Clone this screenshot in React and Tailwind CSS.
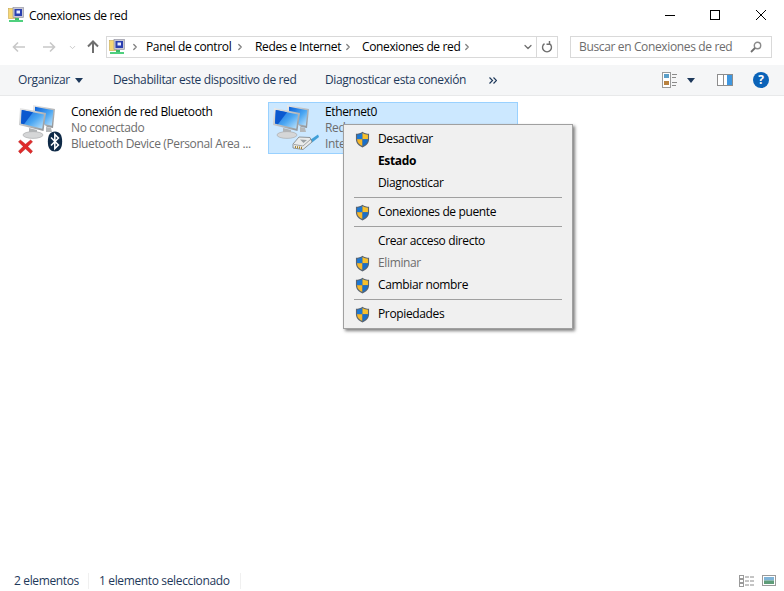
import { ChevronRight, ChevronDown } from 'lucide-react';

const FONT = "font-['Open_Sans','Noto_Sans',sans-serif]";

function NetIconSmall({ className }) {
  return (
    <svg viewBox="0 0 16 16" className={className}>
      <rect x="0.5" y="1.5" width="7" height="10" fill="#f7d774" stroke="#c9a94f" strokeWidth="0.6" />
      <rect x="5" y="0.5" width="10.5" height="10" fill="#c8c8d4" stroke="#8a8a9a" strokeWidth="0.6" />
      <rect x="6.5" y="2" width="7.5" height="7" fill="#2a3fb0" />
      <rect x="8.5" y="3.5" width="3.5" height="3" fill="#e8ecff" />
      <rect x="7" y="11" width="4" height="2" fill="#3db86a" />
      <rect x="1" y="13" width="14" height="2" fill="#4fd07e" />
    </svg>
  );
}

function Shield() {
  return (
    <svg viewBox="0 0 16 18" className="w-[15px] h-[17px]">
      <path d="M8 0.6 C6 2 3.5 2.8 1 2.8 V9 C1 13 4 15.8 8 17.4 C12 15.8 15 13 15 9 V2.8 C12.5 2.8 10 2 8 0.6 Z" fill="#5a6470" />
      <path d="M8 2 C6.2 3.2 4.2 3.8 2.2 3.9 V8.6 H8 Z" fill="#1c78d4" />
      <path d="M8 2 C9.8 3.2 11.8 3.8 13.8 3.9 V8.6 H8 Z" fill="#f7c02c" />
      <path d="M2.2 8.6 H8 V16 C4.8 14.6 2.2 12.4 2.2 9 Z" fill="#f7b82a" />
      <path d="M13.8 8.6 H8 V16 C11.2 14.6 13.8 12.4 13.8 9 Z" fill="#1a6fc9" />
    </svg>
  );
}

function Monitors() {
  return (
    <svg viewBox="0 0 48 48" className="w-12 h-12">
      <defs>
        <linearGradient id="scr" x1="0" y1="0" x2="1" y2="1">
          <stop offset="0" stopColor="#0a5fd8" />
          <stop offset="0.55" stopColor="#4aa6f2" />
          <stop offset="1" stopColor="#c5e6fb" />
        </linearGradient>
        <linearGradient id="frame" x1="0" y1="0" x2="1" y2="1">
          <stop offset="0" stopColor="#ececec" />
          <stop offset="1" stopColor="#8c9094" />
        </linearGradient>
      </defs>
      {/* back monitor */}
      <path d="M18 1 L40 5 L38 24 L32 23 L18 10 Z" fill="url(#frame)" />
      <path d="M20 2.8 L38.4 6.2 L36.8 21.8 L20 18 Z" fill="url(#scr)" />
      <path d="M31 23 L36 24 L37 28 L31 28 Z" fill="#b5b8ba" />
      {/* front monitor */}
      <path d="M5 4 L31 9 L28.5 27 L4 21 Z" fill="url(#frame)" />
      <path d="M6.8 6 L29 10.4 L27.2 24.8 L6 19.6 Z" fill="url(#scr)" />
      <path d="M6.8 6 L18 8.2 L9 20.3 L6 19.6 Z" fill="#0b58cf" />
      <path d="M14 24 L22 26 L22 30 L14 29 Z" fill="#b0b3b5" />
      <ellipse cx="18" cy="31" rx="10" ry="3.4" fill="#d5d6d7" stroke="#a4a6a8" strokeWidth="0.6" />
    </svg>
  );
}

function Cable() {
  return (
    <svg viewBox="0 0 27 16" className="w-[27px] h-4">
      <path d="M18 6 L26 0.5 L27 3 L20 8.5 Z" fill="#3f9fd8" />
      <path d="M7 3 L18 3.5 L20 8 L11 15.5 L1 14 L1 10 Z" fill="#e9ebeb" stroke="#7c8082" strokeWidth="0.8" />
      <path d="M2 10.5 L11 12 L19 5" fill="none" stroke="#8d9193" strokeWidth="0.8" />
      <path d="M3.5 12 V14 M5.5 12.2 V14.4 M7.5 12.5 V14.7 M9.5 12.8 V15" stroke="#a8862e" strokeWidth="1" />
      <path d="M8 5.5 L15 6 L11.5 9 Z" fill="#9aa0a3" />
    </svg>
  );
}

function RedX() {
  return (
    <svg viewBox="0 0 16 16" className="w-[15px] h-[15px]">
      <path d="M2.5 1 L8 5.5 L13.5 1 L15.5 3 L10.5 8 L15.5 13 L13.5 15.5 L8 10.5 L2.5 15.5 L0.5 13 L5.5 8 L0.5 3 Z" fill="#e02b2b" stroke="#b51d1d" strokeWidth="0.5" />
    </svg>
  );
}

function BluetoothBadge() {
  return (
    <svg viewBox="0 0 16 22" className="w-4 h-[21px]">
      <path d="M8 0.5 C13 0.5 15.5 4 15.5 11 C15.5 18 13 21.5 8 21.5 C3 21.5 0.5 18 0.5 11 C0.5 4 3 0.5 8 0.5 Z" fill="#0f2a47" />
      <path d="M3.8 6.8 L11.6 14.6 L7.8 18.4 V3.6 L11.6 7.4 L3.8 15.2" fill="none" stroke="#fff" strokeWidth="1.6" />
    </svg>
  );
}

function Tile({ selected, name, line2, line3, children }) {
  return (
    <div className={`relative flex w-[250px] h-[52px] border ${selected ? 'bg-[#cce8ff] border-[#99d1ff]' : 'border-transparent'}`}>
      <div className="relative mt-[1px] w-12 h-12 shrink-0">
        <Monitors />
        {children}
      </div>
      <div className="ml-2 mt-[1px] text-xs leading-4 whitespace-nowrap">
        <div className="text-black">{name}</div>
        <div className="text-[#6d6d6d]">{line2}</div>
        <div className="text-[#6d6d6d]">{line3}</div>
      </div>
    </div>
  );
}

function MenuItem({ label, shield, bold, disabled }) {
  return (
    <div className="flex items-center h-[22px]">
      <div className="w-[34px] flex justify-center pl-[3px] shrink-0">
        {shield && <Shield />}
      </div>
      <span className={`text-xs ${bold ? 'font-bold text-black' : disabled ? 'text-[#6d6d6d]' : 'text-black'}`}>{label}</span>
    </div>
  );
}

function MenuSep() {
  return <div className="h-[7px] flex items-center pl-[10px] pr-[10px]"><div className="h-px w-full bg-[#a0a0a0]" /></div>;
}

export default function App() {
  return (
    <div className={`relative w-[784px] h-[591px] bg-white flex flex-col overflow-hidden tracking-[-0.36px] ${FONT}`}>
      {/* Title bar */}
      <div className="flex items-center h-[30px] shrink-0">
        <NetIconSmall className="w-4 h-4 ml-2" />
        <span className="ml-[5px] pt-[2px] text-xs text-black">Conexiones de red</span>
        <div className="ml-auto flex items-center pr-[18px]">
          <div className="w-[10px] h-px bg-black" />
          <div className="ml-[35px] w-[10px] h-[10px] border border-black" />
          <svg viewBox="0 0 10 10" className="ml-[36px] w-[10px] h-[10px]"><path d="M0 0 L10 10 M10 0 L0 10" stroke="#000" strokeWidth="1" /></svg>
        </div>
      </div>

      {/* Address row */}
      <div className="flex items-center h-[22px] mt-[6px] shrink-0">
        <svg viewBox="0 0 16 16" className="w-4 h-4 ml-[11px]"><path d="M14 8 H3 M7 3.5 L2.5 8 L7 12.5" fill="none" stroke="#c8c8c8" strokeWidth="1.6" /></svg>
        <svg viewBox="0 0 16 16" className="w-4 h-4 ml-[14px]"><path d="M2 8 H13 M9 3.5 L13.5 8 L9 12.5" fill="none" stroke="#c8c8c8" strokeWidth="1.6" /></svg>
        <ChevronDown className="w-[9px] h-[9px] ml-[11px] text-[#c8c8c8]" strokeWidth={2.5} />
        <svg viewBox="0 0 16 16" className="w-4 h-4 ml-2"><path d="M8 14 V3 M3 7.5 L8 2.5 L13 7.5" fill="none" stroke="#6f6f6f" strokeWidth="2" /></svg>
        <div className="ml-[5px] w-[452px] h-[22px] border border-[#d9d9d9] flex items-center">
          <NetIconSmall className="w-4 h-4 ml-[2px]" />
          <ChevronRight className="w-[10px] h-[10px] ml-[5px] text-[#808080]" strokeWidth={3} />
          <span className="ml-[6px] w-[89px] text-xs text-black whitespace-nowrap">Panel de control</span>
          <ChevronRight className="w-[10px] h-[10px] text-[#808080]" strokeWidth={3} />
          <span className="ml-[10px] w-[88px] text-xs text-black whitespace-nowrap">Redes e Internet</span>
          <ChevronRight className="w-[10px] h-[10px] text-[#808080]" strokeWidth={3} />
          <span className="ml-[9px] w-[100px] text-xs text-black whitespace-nowrap">Conexiones de red</span>
          <ChevronRight className="w-[10px] h-[10px] text-[#808080]" strokeWidth={3} />
          <ChevronDown className="w-3 h-3 ml-auto mr-[2px] text-[#707070]" strokeWidth={2.5} />
          <div className="w-px h-full bg-[#d9d9d9]" />
          <div className="w-5 flex justify-center">
            <svg viewBox="0 0 12 12" className="w-3 h-3"><path d="M3.5 2.6 A4.5 4.5 0 1 0 8.5 2.6 M8.5 0 V3.2 H5.5" fill="none" stroke="#6f6f6f" strokeWidth="1.4" /></svg>
          </div>
        </div>
        <div className="ml-[12px] w-[202px] h-[22px] border border-[#d9d9d9] flex items-center pl-2 pr-[9px]">
          <span className="text-xs text-[#6d6d6d] whitespace-nowrap">Buscar en Conexiones de red</span>
          <svg viewBox="0 0 12 12" className="w-3 h-3 ml-auto"><circle cx="7.5" cy="4.5" r="3.2" fill="none" stroke="#8a8a8a" strokeWidth="1.4" /><path d="M5 7 L1 11" stroke="#6f6f6f" strokeWidth="1.8" /></svg>
        </div>
      </div>

      {/* Command bar */}
      <div className="flex items-center h-[31px] mt-[7px] shrink-0 bg-[#f5f6f7] border-b border-[#e8e9ea] text-xs text-[#1e395b] pl-[18px]">
        <span className="w-[57px]">Organizar</span>
        <svg viewBox="0 0 8 5" className="w-2 h-[5px]"><path d="M0 0 H8 L4 5 Z" fill="#1e395b" /></svg>
        <span className="ml-[30px] w-[212px] whitespace-nowrap">Deshabilitar este dispositivo de red</span>
        <span className="w-[164px] whitespace-nowrap">Diagnosticar esta conexión</span>
        <svg viewBox="0 0 8 7" className="w-2 h-[7px]"><path d="M0.5 0.5 L3.5 3.5 L0.5 6.5 M4.5 0.5 L7.5 3.5 L4.5 6.5" fill="none" stroke="#1e395b" strokeWidth="1.2" /></svg>
        <div className="ml-auto flex items-center pr-[15px]">
          <svg viewBox="0 0 16 16" className="w-4 h-4">
            <rect x="0.5" y="0.5" width="8" height="15" fill="#fff" stroke="#9a9a9a" />
            <rect x="2" y="2" width="5" height="4" fill="#5b9fc9" />
            <rect x="2" y="9" width="5" height="4" fill="#b9823f" />
            <path d="M10 2.5 H15 M10 5.5 H14 M10 10.5 H15 M10 13.5 H14" stroke="#8a8a8a" />
          </svg>
          <svg viewBox="0 0 8 5" className="w-2 h-[5px] ml-[9px]"><path d="M0 0 H8 L4 5 Z" fill="#1e395b" /></svg>
          <svg viewBox="0 0 16 12" className="w-4 h-3 ml-[22px]">
            <rect x="0.5" y="0.5" width="15" height="11" fill="#fff" stroke="#8d8d8d" />
            <rect x="6" y="1" width="1" height="10" fill="#8d8d8d" />
            <rect x="10" y="1" width="5" height="10" fill="#3f97e0" />
          </svg>
          <div className="ml-[20px] w-4 h-4 rounded-full bg-[#0b63b8] flex items-center justify-center text-white text-[12px] font-bold leading-none">?</div>
        </div>
      </div>

      {/* Items */}
      <div className="flex-1 flex gap-1 pl-[14px] pt-[6px]">
        <Tile name="Conexión de red Bluetooth" line2="No conectado" line3="Bluetooth Device (Personal Area ...">
          <div className="absolute left-[3px] top-[35px]"><RedX /></div>
          <div className="absolute left-[32px] top-[27px]"><BluetoothBadge /></div>
        </Tile>
        <Tile selected name="Ethernet0" line2="Red" line3="Inte">
          <div className="absolute left-[23px] top-[30px]"><Cable /></div>
        </Tile>
      </div>

      {/* Status bar */}
      <div className="flex items-center h-[22px] shrink-0 text-xs text-[#1e395b] pl-[14px] pt-[1px]">
        <span className="w-[74px] whitespace-nowrap">2 elementos</span>
        <div className="w-px h-4 bg-[#f0f0f0]" />
        <span className="ml-[10px] w-[141px] whitespace-nowrap">1 elemento seleccionado</span>
        <div className="w-px h-4 bg-[#f0f0f0]" />
        <div className="ml-auto flex items-center pr-2">
          <svg viewBox="0 0 16 12" className="w-4 h-3">
            <rect x="0.5" y="0.5" width="4" height="3" fill="#fff" stroke="#9a9a9a" />
            <rect x="0.5" y="4.5" width="4" height="3" fill="#fff" stroke="#9a9a9a" />
            <rect x="0.5" y="8.5" width="4" height="3" fill="#fff" stroke="#9a9a9a" />
            <path d="M6 2 H10 M11 2 H15 M6 6 H10 M11 6 H15 M6 10 H10 M11 10 H15" stroke="#8a8a8a" />
          </svg>
          <svg viewBox="0 0 14 11" className="w-[14px] h-[11px] ml-[7px]">
            <rect x="0.5" y="0.5" width="13" height="10" fill="#fff" stroke="#9a9a9a" />
            <rect x="2" y="2" width="10" height="3.5" fill="#7fb4d8" />
            <rect x="2" y="5.5" width="10" height="3.5" fill="#5e9c78" />
          </svg>
        </div>
      </div>

      {/* Context menu */}
      <div className="absolute left-[343px] top-[124px] w-[230px] h-[205px] bg-[#f0f0f0] border border-[#a0a0a0] pt-[3px] shadow-[2px_2px_3px_rgba(0,0,0,0.5)]">
        <MenuItem label="Desactivar" shield />
        <MenuItem label="Estado" bold />
        <MenuItem label="Diagnosticar" />
        <MenuSep />
        <MenuItem label="Conexiones de puente" shield />
        <MenuSep />
        <MenuItem label="Crear acceso directo" />
        <MenuItem label="Eliminar" shield disabled />
        <MenuItem label="Cambiar nombre" shield />
        <MenuSep />
        <MenuItem label="Propiedades" shield />
      </div>
    </div>
  );
}
